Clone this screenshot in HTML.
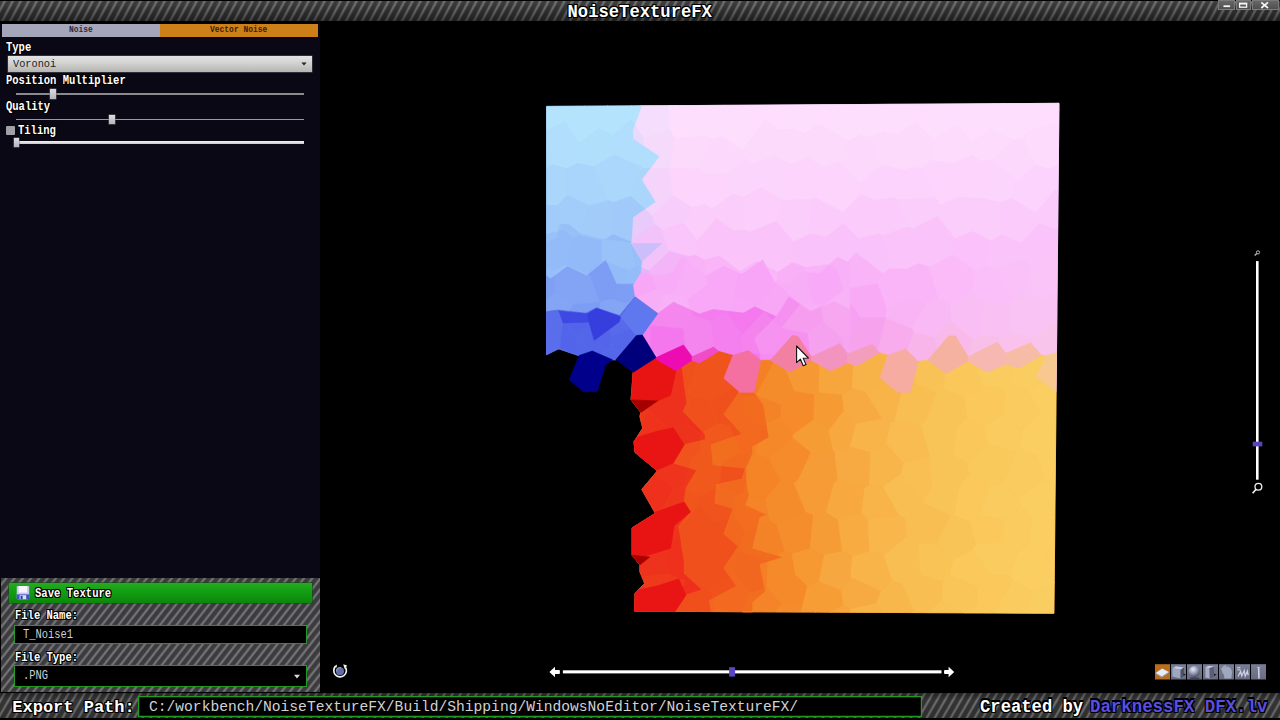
<!DOCTYPE html>
<html><head><meta charset="utf-8"><title>NoiseTextureFX</title>
<style>
html,body{margin:0;padding:0;background:#000;width:1280px;height:720px;overflow:hidden}
body{position:relative;font-family:"Liberation Mono",monospace;color:#fff}
.a{position:absolute}
.t{position:absolute;white-space:pre;line-height:1;transform-origin:0 0}
.b{font-weight:bold}
.ol{text-shadow:1px 0 0 #000,-1px 0 0 #000,0 1px 0 #000,0 -1px 0 #000,1px 1px 0 #000,-1px -1px 0 #000,1px -1px 0 #000,-1px 1px 0 #000}
.cf1{background:linear-gradient(to bottom,rgba(255,255,255,.07) 0%,rgba(0,0,0,.05) 45%,rgba(0,0,0,.38) 100%),repeating-linear-gradient(118deg,#2f2f2f 0,#333 2.4px,#5c5c5c 3.5px,#6c6c6c 4.2px,#5c5c5c 5px,#333 6.2px,#2f2f2f 7.06px)}
.cf2{background:repeating-linear-gradient(128deg,#3a3a3d 0,#3e3e41 2.5px,#6a6a6e 3.6px,#78787c 4.25px,#6a6a6e 4.9px,#3e3e41 6px,#3a3a3d 6.52px)}
.cf3{background:linear-gradient(to bottom,rgba(0,0,0,.3) 0%,rgba(0,0,0,0) 30%,rgba(0,0,0,.1) 100%),repeating-linear-gradient(120deg,#323232 0,#363636 2.4px,#606060 3.5px,#727272 4.2px,#606060 4.9px,#363636 6px,#323232 6.93px)}
.lbl{font-size:12px;font-weight:bold;transform:scaleX(.875)}
</style></head><body>
<!-- title bar -->
<div class="a cf1" style="left:0;top:1px;width:1280px;height:19.5px"></div>
<div class="t b ol" style="left:567.5px;top:3.6px;font-size:17.2px;transform:scaleY(1.03)">NoiseTextureFX</div>
<!-- window buttons -->
<div class="a" style="left:1218px;top:0;width:16.5px;height:9.5px;background:linear-gradient(#6a6a6a,#4c4c4c);box-shadow:inset 0 0 0 1px #7a7a7a"></div>
<div class="a" style="left:1235.5px;top:0;width:15px;height:9.5px;background:linear-gradient(#6a6a6a,#4c4c4c);box-shadow:inset 0 0 0 1px #7a7a7a"></div>
<div class="a" style="left:1251.5px;top:0;width:27.5px;height:9.5px;background:linear-gradient(#6a6a6a,#4c4c4c);box-shadow:inset 0 0 0 1px #7a7a7a"></div>
<svg class="a" style="left:1216px;top:0" width="64" height="12" viewBox="1216 0 64 12">
<rect x="1223.5" y="5.3" width="6.6" height="1.8" fill="#f4f4f4"/>
<rect x="1239.6" y="3.8" width="7" height="3.4" fill="none" stroke="#f4f4f4" stroke-width="1.3"/><rect x="1239" y="2.6" width="8.2" height="1.6" fill="#f4f4f4"/>
<path d="M1261.3 2.3 L1268 8 M1268 2.3 L1261.3 8" stroke="#f4f4f4" stroke-width="1.7" fill="none"/>
</svg>
<!-- left panel -->
<div class="a" style="left:0;top:20.5px;width:319.7px;height:558px;background:#0a0814"></div>
<div class="a" style="left:0;top:20.5px;width:320px;height:3.5px;background:#020205"></div>
<div class="a" style="left:2px;top:24px;width:158px;height:12.8px;background:#a6a6ba"></div>
<div class="a" style="left:160px;top:24px;width:158px;height:12.8px;background:#cd8018"></div>
<div class="t b" style="left:68.8px;top:26px;font-size:9px;color:#2b2b40;transform:scaleX(.885)">Noise</div>
<div class="t b" style="left:209.8px;top:26px;font-size:9px;color:#3a2204;transform:scaleX(.885)">Vector Noise</div>
<div class="t lbl ol" style="left:5.8px;top:41.5px">Type</div>
<div class="a" style="left:8.3px;top:56px;width:303.4px;height:16px;background:linear-gradient(#e4e4e4,#d2d2d0 45%,#b4b4b0);box-shadow:0 0 0 .5px #55555c"></div>
<div class="t" style="left:12.6px;top:58.6px;font-size:11px;color:#1e1e1e;transform:scaleX(.935)">Voronoi</div>
<svg class="a" style="left:300px;top:60px" width="9" height="8"><path d="M1.4 2.6 L6.6 2.6 L4 5.6Z" fill="#222"/></svg>
<div class="t lbl ol" style="left:5.8px;top:75.1px">Position Multiplier</div>
<div class="a" style="left:16px;top:93px;width:288.2px;height:2px;background:#8a8a8e"></div>
<div class="a" style="left:50.3px;top:89.4px;width:6px;height:9.2px;background:linear-gradient(#dcdce2,#b4b4bc);box-shadow:0 0 0 .5px #666"></div>
<div class="t lbl ol" style="left:5.8px;top:101.3px">Quality</div>
<div class="a" style="left:16px;top:118.5px;width:288.2px;height:1.6px;background:#9a9a9e"></div>
<div class="a" style="left:109.3px;top:115.2px;width:5.8px;height:9px;background:linear-gradient(#dcdce2,#b4b4bc);box-shadow:0 0 0 .5px #666"></div>
<div class="a" style="left:6.2px;top:126.4px;width:9px;height:9px;background:#a0a0a6;border-radius:1px"></div>
<div class="t lbl ol" style="left:18px;top:125.2px">Tiling</div>
<div class="a" style="left:16px;top:141px;width:288.2px;height:2.8px;background:linear-gradient(#f4f4f4,#c8c8c8)"></div>
<div class="a" style="left:13.5px;top:137.8px;width:5.2px;height:9.6px;background:linear-gradient(#dcdce2,#b4b4bc);box-shadow:0 0 0 .5px #666"></div>
<!-- save panel -->
<div class="a cf2" style="left:1px;top:578.3px;width:318.5px;height:114.2px"></div>
<div class="a" style="left:8.6px;top:582.8px;width:303.4px;height:20.5px;background:linear-gradient(#2aa822,#12a012 40%,#0c860c);box-shadow:0 0 0 .6px #0a500a"></div>
<svg class="a" style="left:16px;top:585px" width="15" height="16" viewBox="0 0 15 16">
<rect x=".7" y="1" width="12.5" height="13.2" rx="1" fill="#c9c6ee"/>
<rect x="2.6" y="1" width="8.6" height="6.6" fill="#f7f6ff"/>
<rect x=".7" y="9.4" width="12.5" height="4.8" fill="#3d55c8"/>
<rect x="3.6" y="10.2" width="6.6" height="4" fill="#dcdcf0"/><rect x="4.6" y="10.8" width="2" height="3.4" fill="#2b3ea6"/>
</svg>
<div class="t lbl ol" style="left:35.2px;top:587.5px;font-size:12.1px">Save Texture</div>
<div class="t lbl ol" style="left:15.2px;top:609.6px">File Name:</div>
<div class="a" style="left:13.9px;top:624.9px;width:293px;height:19.2px;background:#000;box-shadow:inset 0 0 0 1px #239a23"></div>
<div class="t" style="left:22.8px;top:628.5px;font-size:12px;color:#cfcfcf;transform:scaleX(.868)">T_Noise1</div>
<div class="t lbl ol" style="left:15.2px;top:651.5px">File Type:</div>
<div class="a" style="left:13.9px;top:665.2px;width:293px;height:21.5px;background:#000;box-shadow:inset 0 0 0 1px #239a23"></div>
<div class="t" style="left:22.8px;top:670px;font-size:12px;color:#cfcfcf;transform:scaleX(.868)">.PNG</div>
<svg class="a" style="left:292px;top:672px" width="10" height="8"><path d="M2 2.8 L8 2.8 L5 6.4Z" fill="#ddd"/></svg>
<!-- bottom bar -->
<div class="a cf3" style="left:0;top:693.3px;width:1280px;height:25px"></div>
<div class="t b ol" style="left:12.3px;top:699.3px;font-size:17px">Export Path:</div>
<div class="a" style="left:137.5px;top:695.6px;width:784px;height:21.4px;background:#000;box-shadow:inset 0 0 0 1.2px #239a23"></div>
<div class="t" style="left:148.6px;top:700.2px;font-size:15px;color:#d2d2d2;transform:scaleX(.9745)">C:/workbench/NoiseTextureFX/Build/Shipping/WindowsNoEditor/NoiseTextureFX/</div>
<div class="t b ol" style="left:980px;top:697.5px;font-size:17.2px;transform:scaleY(1.04)">Created by</div>
<div class="t b ol" style="left:1090px;top:697.5px;font-size:17.4px;color:#5a4ee0;transform:scaleY(1.04)">DarknessFX DFX.lv</div>
<!-- viewport widgets -->
<svg class="a" style="left:320px;top:240px" width="960" height="452" viewBox="320 240 960 452">
<!-- rotate icon -->
<circle cx="340" cy="671.2" r="4" fill="#6070a4"/><path d="M336.4 671.4 A3.6 3.6 0 0 1 341 667.8" stroke="#8a98c4" stroke-width="1.2" fill="none"/>
<path d="M335.6 666.2 A6.3 6.3 0 1 0 345.4 667.2" fill="none" stroke="#f2f2f2" stroke-width="1.7"/>
<path d="M343.2 664.2 L347.2 665.6 L344.6 668.8Z" fill="#f2f2f2"/><path d="M334.2 666.6 L336.8 664.6 L336.8 667.4Z" fill="#f2f2f2"/>
<!-- h slider -->
<rect x="562.9" y="670.3" width="378.6" height="3.1" fill="#fff"/>
<path d="M549.4 672 L555 666.8 L555 669.9 L559.6 669.9 Q560.4 672 559.6 674.1 L555 674.1 L555 677.2Z" fill="#fff"/>
<path d="M954.2 672 L948.6 666.8 L948.6 669.9 L944.4 669.9 Q943.4 672 944.4 674.1 L948.6 674.1 L948.6 677.2Z" fill="#fff"/>
<rect x="729.1" y="667.2" width="6" height="9.4" fill="#5a46c0"/>
<!-- v slider -->
<rect x="1256" y="261.1" width="2.6" height="218.6" fill="#fff"/>
<rect x="1252.7" y="441.7" width="9.6" height="4.7" fill="#5646b8"/>
<circle cx="1258" cy="252.4" r="1.6" fill="none" stroke="#bbb" stroke-width="1"/><path d="M1256.8 253.6 L1254.6 255.6" stroke="#bbb" stroke-width="1.3"/>
<circle cx="1258.4" cy="486.7" r="3.4" fill="none" stroke="#f0f0f0" stroke-width="1.3"/><path d="M1256 489.4 L1252.6 493.2" stroke="#f0f0f0" stroke-width="1.6"/>
</svg>
<svg class="a" style="left:540px;top:98px" width="524" height="520" viewBox="540 98 524 520"><g stroke-width=".7" stroke-linejoin="round">
<path d="M558.2 348.6 579.0 355.6 592.3 351.1 612.4 359.7 615.9 359.7 636.5 335.5 642.3 335.0 657.8 313.5 635.4 297.0 633.5 285.3 641.3 272.7 642.3 261.0 631.6 243.5 632.5 235.0 633.5 217.5 655.9 202.0 642.2 179.6 659.8 156.3 633.5 138.8 633.5 130.0 642.2 105.8 546.6 106.4 546.6 354.6Z" fill="#96bef8" stroke="#96bef8"/>
<path d="M633.5 130.0 633.5 138.8 659.8 156.3 642.2 179.6 655.9 202.0 633.5 217.5 632.5 235.0 631.6 243.5 642.3 261.0 641.3 272.7 633.5 285.3 635.4 297.0 657.8 313.5 642.3 335.0 656.1 357.6 656.7 359.6 676.0 370.7 692.0 360.3 699.7 363.0 718.5 351.3 733.0 355.4 724.0 378.3 740.0 392.2 753.9 392.2 760.8 360.3 770.4 360.3 789.9 372.1 811.4 360.3 830.8 370.7 847.5 363.0 857.2 365.8 879.4 352.6 887.8 355.4 880.1 377.6 897.5 392.2 910.2 392.2 918.2 361.5 927.8 360.3 946.5 373.5 968.0 361.0 986.8 372.1 1005.6 364.4 1019.4 367.9 1041.7 355.4 1047.0 355.4 1036.1 376.3 1055.6 391.5 1056.1 391.5 1059.0 103.3 642.2 105.8Z" fill="#fbc8fa" stroke="#fbc8fa"/>
<path d="M631.1 399.9 640.9 412.5 639.9 416.4 642.8 428.1 634.0 441.7 635.0 452.4 657.4 470.9 641.8 489.4 655.4 513.3 632.1 527.9 632.1 555.2 639.9 564.9 639.9 571.7 644.7 583.4 635.0 593.1 634.7 611.2 1053.9 613.3 1056.1 391.5 1055.6 391.5 1036.1 376.3 1047.0 355.4 1041.7 355.4 1019.4 367.9 1005.6 364.4 986.8 372.1 968.0 361.0 946.5 373.5 927.8 360.3 918.2 361.5 910.2 392.2 897.5 392.2 880.1 377.6 887.8 355.4 879.4 352.6 857.2 365.8 847.5 363.0 830.8 370.7 811.4 360.3 789.9 372.1 770.4 360.3 760.8 360.3 753.9 392.2 740.0 392.2 724.0 378.3 733.0 355.4 718.5 351.3 699.7 363.0 692.0 360.3 676.0 370.7 656.7 359.6 656.1 357.6 633.2 372.2Z" fill="#f6a037" stroke="#f6a037"/>
<path d="M569.1 110.6 578.2 106.2 563.2 106.3Z" fill="#b4e4fd" stroke="#b4e4fd"/>
<path d="M592.8 111.1 608.0 106.0 584.3 106.2Z" fill="#b4e4fd" stroke="#b4e4fd"/>
<path d="M634.0 107.9 641.4 105.8 631.5 105.9Z" fill="#b4e4fd" stroke="#b4e4fd"/>
<path d="M669.3 106.1 670.9 105.6 668.4 105.7Z" fill="#f8defd" stroke="#f8defd"/>
<path d="M693.4 110.2 702.1 105.5 674.3 105.6Z" fill="#fddefd" stroke="#fddefd"/>
<path d="M730.9 108.4 735.9 105.9 736.0 105.3 724.1 105.3Z" fill="#fddefd" stroke="#fddefd"/>
<path d="M735.9 105.9 762.6 113.0 767.5 105.1 736.0 105.3Z" fill="#fddefd" stroke="#fddefd"/>
<path d="M855.4 109.0 863.3 104.5 850.1 104.6Z" fill="#fddefd" stroke="#fddefd"/>
<path d="M916.5 113.3 943.9 105.2 943.6 104.0 910.7 104.2Z" fill="#fddefd" stroke="#fddefd"/>
<path d="M943.9 105.2 957.6 113.5 965.0 107.9 965.1 103.9 943.6 104.0Z" fill="#fddefd" stroke="#fddefd"/>
<path d="M965.0 107.9 989.4 107.0 993.4 103.7 965.1 103.9Z" fill="#fddefd" stroke="#fddefd"/>
<path d="M1020.4 116.7 1029.1 103.5 1003.7 103.6Z" fill="#fddefd" stroke="#fddefd"/>
<path d="M1059.0 104.1 1059.0 103.3 1057.8 103.3Z" fill="#fddefd" stroke="#fddefd"/>
<path d="M564.9 121.7 569.1 110.6 563.2 106.3 546.6 106.4 546.6 131.3Z" fill="#b4e4fd" stroke="#b4e4fd"/>
<path d="M569.1 110.6 564.9 121.7 578.9 144.1 599.1 128.5 592.8 111.1 584.3 106.2 578.2 106.2Z" fill="#b4e4fd" stroke="#b4e4fd"/>
<path d="M592.8 111.1 599.1 128.5 613.2 136.0 631.2 119.7 634.0 107.9 631.5 105.9 608.0 106.0Z" fill="#b4e4fd" stroke="#b4e4fd"/>
<path d="M634.0 107.9 631.2 119.7 635.1 125.5 642.2 105.8 641.4 105.8Z" fill="#b4e3fd" stroke="#b4e3fd"/>
<path d="M669.6 129.8 669.3 106.1 668.4 105.7 642.2 105.8 635.1 125.5 644.0 138.8Z" fill="#f5defd" stroke="#f5defd"/>
<path d="M669.3 106.1 669.6 129.8 674.3 139.1 705.3 135.8 693.4 110.2 674.3 105.6 670.9 105.6Z" fill="#fddefd" stroke="#fddefd"/>
<path d="M705.3 135.8 711.0 139.4 722.1 136.5 730.9 108.4 724.1 105.3 702.1 105.5 693.4 110.2Z" fill="#fddefd" stroke="#fddefd"/>
<path d="M722.1 136.5 742.3 150.7 765.2 119.9 762.6 113.0 735.9 105.9 730.9 108.4Z" fill="#fddefd" stroke="#fddefd"/>
<path d="M762.6 113.0 765.2 119.9 779.5 130.0 793.5 129.0 796.1 104.9 767.5 105.1Z" fill="#fddefd" stroke="#fddefd"/>
<path d="M793.5 129.0 804.6 133.7 818.9 124.3 822.2 104.7 796.1 104.9Z" fill="#fddefd" stroke="#fddefd"/>
<path d="M818.9 124.3 849.2 141.4 858.7 135.3 855.4 109.0 850.1 104.6 822.2 104.7Z" fill="#fddefd" stroke="#fddefd"/>
<path d="M855.4 109.0 858.7 135.3 868.3 137.4 883.3 131.9 888.0 104.3 863.3 104.5Z" fill="#fddefd" stroke="#fddefd"/>
<path d="M883.3 131.9 897.7 134.9 915.7 122.3 916.5 113.3 910.7 104.2 888.0 104.3Z" fill="#fddefd" stroke="#fddefd"/>
<path d="M933.0 139.4 956.9 124.7 957.6 113.5 943.9 105.2 916.5 113.3 915.7 122.3Z" fill="#fddefd" stroke="#fddefd"/>
<path d="M956.9 124.7 971.5 142.8 991.0 129.6 989.4 107.0 965.0 107.9 957.6 113.5Z" fill="#fddefd" stroke="#fddefd"/>
<path d="M1003.7 103.6 993.4 103.7 989.4 107.0 991.0 129.6 1013.7 140.0 1023.8 138.4 1026.2 132.9 1020.4 116.7Z" fill="#fddefd" stroke="#fddefd"/>
<path d="M1020.4 116.7 1026.2 132.9 1053.1 122.5 1058.9 109.5 1059.0 104.1 1057.8 103.3 1029.1 103.5Z" fill="#fddefd" stroke="#fddefd"/>
<path d="M1053.1 122.5 1058.7 129.8 1058.9 109.5Z" fill="#fddefd" stroke="#fddefd"/>
<path d="M552.9 164.7 546.6 149.2 546.6 167.8Z" fill="#b0dffc" stroke="#b0dffc"/>
<path d="M552.9 164.7 567.2 168.9 577.7 163.4 578.9 144.1 564.9 121.7 546.6 131.3 546.6 149.2Z" fill="#b0defc" stroke="#b0defc"/>
<path d="M577.7 163.4 593.5 166.8 614.6 155.2 613.2 136.0 599.1 128.5 578.9 144.1Z" fill="#b0dffc" stroke="#b0dffc"/>
<path d="M631.2 119.7 613.2 136.0 614.6 155.2 641.5 167.3 643.4 145.4 633.5 138.8 633.5 130.0 635.1 125.5Z" fill="#b0defc" stroke="#b0defc"/>
<path d="M644.0 138.8 635.1 125.5 633.5 130.0 633.5 138.8 643.4 145.4Z" fill="#e9dafc" stroke="#e9dafc"/>
<path d="M642.4 168.4 650.6 168.5 659.8 156.3 643.4 145.4 641.5 167.3Z" fill="#b0defc" stroke="#b0defc"/>
<path d="M669.5 168.6 670.2 168.2 674.3 139.1 669.6 129.8 644.0 138.8 643.4 145.4 659.8 156.3 650.6 168.5Z" fill="#f5dafc" stroke="#f5dafc"/>
<path d="M699.8 169.3 711.0 139.4 705.3 135.8 674.3 139.1 670.2 168.2Z" fill="#fcdafc" stroke="#fcdafc"/>
<path d="M699.8 169.3 703.7 173.4 727.6 174.1 745.5 159.2 742.3 150.7 722.1 136.5 711.0 139.4Z" fill="#fcd9fc" stroke="#fcd9fc"/>
<path d="M742.3 150.7 745.5 159.2 753.5 163.9 774.9 155.9 779.5 130.0 765.2 119.9Z" fill="#fcdafc" stroke="#fcdafc"/>
<path d="M793.5 129.0 779.5 130.0 774.9 155.9 790.4 164.6 808.2 157.8 804.6 133.7Z" fill="#fcdafc" stroke="#fcdafc"/>
<path d="M808.2 157.8 823.1 167.2 839.4 162.1 849.2 141.4 818.9 124.3 804.6 133.7Z" fill="#fcdafc" stroke="#fcdafc"/>
<path d="M839.4 162.1 860.1 184.4 881.1 165.2 868.3 137.4 858.7 135.3 849.2 141.4Z" fill="#fcd9fc" stroke="#fcd9fc"/>
<path d="M868.3 137.4 881.1 165.2 905.3 170.3 909.2 168.0 897.7 134.9 883.3 131.9Z" fill="#fcdafc" stroke="#fcdafc"/>
<path d="M897.7 134.9 909.2 168.0 922.4 168.0 930.9 160.6 933.0 139.4 915.7 122.3Z" fill="#fcdafc" stroke="#fcdafc"/>
<path d="M930.9 160.6 953.1 163.4 972.2 155.0 971.5 142.8 956.9 124.7 933.0 139.4Z" fill="#fcdbfc" stroke="#fcdbfc"/>
<path d="M971.5 142.8 972.2 155.0 980.2 161.5 992.1 160.1 1013.7 140.0 991.0 129.6Z" fill="#fcdbfc" stroke="#fcdbfc"/>
<path d="M1013.7 140.0 992.1 160.1 1017.5 181.1 1035.3 165.2 1023.8 138.4Z" fill="#fcd9fc" stroke="#fcd9fc"/>
<path d="M1053.1 122.5 1026.2 132.9 1023.8 138.4 1035.3 165.2 1049.8 169.4 1058.4 164.6 1058.7 129.8Z" fill="#fcdbfc" stroke="#fcdbfc"/>
<path d="M557.5 205.8 567.1 195.5 567.2 168.9 552.9 164.7 546.6 167.8 546.6 205.2Z" fill="#aad6fc" stroke="#aad6fc"/>
<path d="M567.2 168.9 567.1 195.5 589.3 205.9 608.4 200.5 593.5 166.8 577.7 163.4Z" fill="#a9d5fc" stroke="#a9d5fc"/>
<path d="M593.5 166.8 608.4 200.5 613.4 202.6 630.8 196.4 642.4 168.4 641.5 167.3 614.6 155.2Z" fill="#abd7fc" stroke="#abd7fc"/>
<path d="M642.4 168.4 630.8 196.4 645.2 209.4 655.9 202.0 642.2 179.6 650.6 168.5Z" fill="#aad6fc" stroke="#aad6fc"/>
<path d="M652.7 216.2 672.9 195.8 669.5 168.6 650.6 168.5 642.2 179.6 655.9 202.0 645.2 209.4Z" fill="#f5d4fc" stroke="#f5d4fc"/>
<path d="M703.7 173.4 699.8 169.3 670.2 168.2 669.5 168.6 672.9 195.8 692.2 207.5 705.2 204.8Z" fill="#fcd4fc" stroke="#fcd4fc"/>
<path d="M732.4 194.1 727.6 174.1 703.7 173.4 705.2 204.8 712.0 209.2Z" fill="#fcd4fc" stroke="#fcd4fc"/>
<path d="M727.6 174.1 732.4 194.1 744.4 197.3 761.0 187.5 753.5 163.9 745.5 159.2Z" fill="#fcd5fc" stroke="#fcd5fc"/>
<path d="M790.4 164.6 774.9 155.9 753.5 163.9 761.0 187.5 782.6 200.2Z" fill="#fcd5fc" stroke="#fcd5fc"/>
<path d="M790.4 164.6 782.6 200.2 782.8 200.3 811.1 199.8 815.3 198.0 823.1 167.2 808.2 157.8Z" fill="#fcd4fc" stroke="#fcd4fc"/>
<path d="M815.3 198.0 842.6 212.2 861.3 194.4 860.1 184.4 839.4 162.1 823.1 167.2Z" fill="#fcd4fc" stroke="#fcd4fc"/>
<path d="M860.1 184.4 861.3 194.4 875.1 200.2 894.8 197.7 905.3 170.3 881.1 165.2Z" fill="#fcd3fc" stroke="#fcd3fc"/>
<path d="M905.3 170.3 894.8 197.7 896.6 200.0 935.3 198.0 922.4 168.0 909.2 168.0Z" fill="#fcd3fc" stroke="#fcd3fc"/>
<path d="M959.0 197.4 953.1 163.4 930.9 160.6 922.4 168.0 935.3 198.0 940.8 205.2Z" fill="#fcd4fc" stroke="#fcd4fc"/>
<path d="M980.2 161.5 972.2 155.0 953.1 163.4 959.0 197.4 980.8 198.3Z" fill="#fcd4fc" stroke="#fcd4fc"/>
<path d="M981.0 198.5 1000.6 202.4 1011.0 197.9 1017.5 181.1 992.1 160.1 980.2 161.5 980.8 198.3Z" fill="#fcd5fc" stroke="#fcd5fc"/>
<path d="M1011.0 197.9 1035.5 213.2 1055.1 189.7 1049.8 169.4 1035.3 165.2 1017.5 181.1Z" fill="#fcd3fc" stroke="#fcd3fc"/>
<path d="M1049.8 169.4 1055.1 189.7 1058.1 191.6 1058.4 164.6Z" fill="#fcd3fc" stroke="#fcd3fc"/>
<path d="M558.3 231.6 559.9 224.6 561.9 224.5 557.5 205.8 546.6 205.2 546.6 234.1Z" fill="#a1cbfa" stroke="#a1cbfa"/>
<path d="M563.3 230.5 561.9 224.5 559.9 224.6 558.3 231.6Z" fill="#99c1f8" stroke="#99c1f8"/>
<path d="M589.3 205.9 567.1 195.5 557.5 205.8 561.9 224.5 568.3 224.3 580.1 233.6Z" fill="#a2ccfa" stroke="#a2ccfa"/>
<path d="M563.3 230.5 573.0 237.8 579.4 235.8 580.1 233.6 568.3 224.3 561.9 224.5Z" fill="#98c0f8" stroke="#98c0f8"/>
<path d="M580.1 233.6 581.3 234.5 601.1 239.1 605.0 239.6 613.2 234.7 613.4 202.6 608.4 200.5 589.3 205.9Z" fill="#a2cbfa" stroke="#a2cbfa"/>
<path d="M579.4 235.8 602.2 241.3 605.0 239.6 601.1 239.1 581.3 234.5 580.1 233.6Z" fill="#97c0f8" stroke="#97c0f8"/>
<path d="M630.8 196.4 613.4 202.6 613.2 234.7 630.7 242.0 631.9 241.1 632.5 235.0 633.5 217.5 645.2 209.4Z" fill="#a1cafa" stroke="#a1cafa"/>
<path d="M645.2 209.4 633.5 217.5 632.5 235.0 631.9 241.1 654.4 224.4 652.7 216.2Z" fill="#e8cbfb" stroke="#e8cbfb"/>
<path d="M692.2 207.5 672.9 195.8 652.7 216.2 654.4 224.4 661.9 229.7 683.1 223.1Z" fill="#f6cdfb" stroke="#f6cdfb"/>
<path d="M705.2 204.8 692.2 207.5 683.1 223.1 697.4 240.5 716.4 219.0 712.0 209.2Z" fill="#fbcdfb" stroke="#fbcdfb"/>
<path d="M716.4 219.0 734.1 230.7 745.0 230.2 744.4 197.3 732.4 194.1 712.0 209.2Z" fill="#fbcdfb" stroke="#fbcdfb"/>
<path d="M761.0 187.5 744.4 197.3 745.0 230.2 750.4 232.3 776.2 221.2 782.8 200.3 782.6 200.2Z" fill="#fbcefb" stroke="#fbcefb"/>
<path d="M776.2 221.2 793.2 242.1 810.2 234.1 811.1 199.8 782.8 200.3Z" fill="#fbcdfb" stroke="#fbcdfb"/>
<path d="M810.2 234.1 826.1 237.0 843.5 223.6 842.6 212.2 815.3 198.0 811.1 199.8Z" fill="#fbccfb" stroke="#fbccfb"/>
<path d="M843.5 223.6 858.8 238.7 879.2 234.1 875.1 200.2 861.3 194.4 842.6 212.2Z" fill="#fbccfb" stroke="#fbccfb"/>
<path d="M879.2 234.1 883.5 235.5 908.2 226.8 896.6 200.0 894.8 197.7 875.1 200.2Z" fill="#fbcbfb" stroke="#fbcbfb"/>
<path d="M935.3 198.0 896.6 200.0 908.2 226.8 912.8 228.5 937.4 216.6 940.8 205.2Z" fill="#fbcdfb" stroke="#fbcdfb"/>
<path d="M937.4 216.6 954.9 238.8 972.1 231.5 981.0 198.5 980.8 198.3 959.0 197.4 940.8 205.2Z" fill="#fbcdfb" stroke="#fbcdfb"/>
<path d="M991.0 241.0 1002.1 234.5 1000.6 202.4 981.0 198.5 972.1 231.5Z" fill="#fbcdfb" stroke="#fbcdfb"/>
<path d="M1011.0 197.9 1000.6 202.4 1002.1 234.5 1021.5 243.4 1039.3 223.3 1035.5 213.2Z" fill="#fbccfb" stroke="#fbccfb"/>
<path d="M1055.1 189.7 1035.5 213.2 1039.3 223.3 1055.9 229.8 1057.7 229.2 1058.1 191.6Z" fill="#fbccfb" stroke="#fbccfb"/>
<path d="M546.6 234.1 546.6 242.7 556.8 238.3 558.3 231.6Z" fill="#99c0f8" stroke="#99c0f8"/>
<path d="M555.0 270.9 565.5 265.1 573.0 237.8 563.3 230.5 558.3 231.6 556.8 238.3 546.6 242.7 546.6 268.2Z" fill="#93bbf8" stroke="#93bbf8"/>
<path d="M565.5 265.1 587.8 274.9 597.1 267.4 602.0 261.0 602.2 241.3 579.4 235.8 573.0 237.8Z" fill="#93baf8" stroke="#93baf8"/>
<path d="M590.5 276.0 597.1 267.4 587.8 274.9Z" fill="#7c9bf4" stroke="#7c9bf4"/>
<path d="M630.7 242.0 613.2 234.7 605.0 239.6 630.9 242.8Z" fill="#95baf7" stroke="#95baf7"/>
<path d="M602.2 241.3 602.0 261.0 604.1 261.7 605.7 260.5 606.7 262.6 629.5 270.5 636.9 266.3 630.9 242.8 605.0 239.6Z" fill="#99c2f8" stroke="#99c2f8"/>
<path d="M606.7 262.6 605.7 260.5 604.1 261.7Z" fill="#84a5f4" stroke="#84a5f4"/>
<path d="M630.7 242.0 630.9 242.8 631.7 242.9 631.6 243.5 631.9 241.1Z" fill="#97bdf8" stroke="#97bdf8"/>
<path d="M636.9 266.3 641.7 268.0 642.3 261.0 631.6 243.5 631.7 242.9 630.9 242.8Z" fill="#97bff8" stroke="#97bff8"/>
<path d="M631.9 241.1 631.6 243.5 642.3 261.0 641.7 268.0 649.4 270.8 669.5 251.3 661.9 229.7 654.4 224.4Z" fill="#f2c2fa" stroke="#f2c2fa"/>
<path d="M661.9 229.7 669.5 251.3 688.3 256.6 695.6 255.2 697.4 240.5 683.1 223.1Z" fill="#fac5fa" stroke="#fac5fa"/>
<path d="M697.4 240.5 695.6 255.2 704.0 260.1 719.3 256.0 734.1 230.7 716.4 219.0Z" fill="#fac4fa" stroke="#fac4fa"/>
<path d="M739.8 271.5 756.5 261.5 750.4 232.3 745.0 230.2 734.1 230.7 719.3 256.0Z" fill="#fac4fa" stroke="#fac4fa"/>
<path d="M778.1 272.2 792.3 262.6 793.2 242.1 776.2 221.2 750.4 232.3 756.5 261.5 758.7 262.6 762.8 259.8 766.1 266.3Z" fill="#fac4fa" stroke="#fac4fa"/>
<path d="M766.1 266.3 762.8 259.8 758.7 262.6Z" fill="#f8a7f7" stroke="#f8a7f7"/>
<path d="M805.7 267.6 827.1 264.6 826.1 237.0 810.2 234.1 793.2 242.1 792.3 262.6Z" fill="#fac2fa" stroke="#fac2fa"/>
<path d="M856.4 253.0 858.8 238.7 843.5 223.6 826.1 237.0 827.1 264.6 828.6 265.4 837.7 257.1 847.0 261.9Z" fill="#fac2fa" stroke="#fac2fa"/>
<path d="M838.1 270.4 847.0 261.9 837.7 257.1 828.6 265.4Z" fill="#f8b0f7" stroke="#f8b0f7"/>
<path d="M890.6 268.7 883.5 235.5 879.2 234.1 858.8 238.7 856.4 253.0 882.6 273.7Z" fill="#fac2fa" stroke="#fac2fa"/>
<path d="M919.2 263.6 912.8 228.5 908.2 226.8 883.5 235.5 890.6 268.7 906.6 269.1Z" fill="#fac4fa" stroke="#fac4fa"/>
<path d="M912.8 228.5 919.2 263.6 929.4 267.2 952.9 255.1 954.9 238.8 937.4 216.6Z" fill="#fac3fa" stroke="#fac3fa"/>
<path d="M954.9 238.8 952.9 255.1 975.7 271.8 985.9 266.5 991.0 241.0 972.1 231.5Z" fill="#fac1fa" stroke="#fac1fa"/>
<path d="M985.9 266.5 996.2 268.9 1024.4 259.4 1021.5 243.4 1002.1 234.5 991.0 241.0Z" fill="#fac3fa" stroke="#fac3fa"/>
<path d="M1021.5 243.4 1024.4 259.4 1030.3 265.0 1054.4 258.2 1055.9 229.8 1039.3 223.3Z" fill="#fac4fa" stroke="#fac4fa"/>
<path d="M1054.4 258.2 1057.4 260.1 1057.7 229.2 1055.9 229.8Z" fill="#fac4fa" stroke="#fac4fa"/>
<path d="M555.0 270.9 546.6 268.2 546.6 276.1 550.7 278.8 555.2 275.5Z" fill="#96bef8" stroke="#96bef8"/>
<path d="M555.9 292.6 555.2 275.5 550.7 278.8 546.6 276.1 546.6 300.4Z" fill="#80a0f4" stroke="#80a0f4"/>
<path d="M565.5 265.1 555.0 270.9 555.2 275.5 567.5 266.6 586.6 275.8 587.8 274.9Z" fill="#99c1f8" stroke="#99c1f8"/>
<path d="M587.8 274.9 586.6 275.8 567.5 266.6 555.2 275.5 555.9 292.6 572.8 305.0 600.2 301.9 590.5 276.0Z" fill="#83a4f4" stroke="#83a4f4"/>
<path d="M602.0 261.0 597.1 267.4 604.1 261.7Z" fill="#93bbf8" stroke="#93bbf8"/>
<path d="M629.5 270.5 606.7 262.6 616.4 284.2 621.0 284.2Z" fill="#93bbf8" stroke="#93bbf8"/>
<path d="M590.5 276.0 600.2 301.9 600.5 302.1 611.8 299.0 621.0 284.2 616.4 284.2 606.7 262.6 604.1 261.7 597.1 267.4Z" fill="#7d9cf4" stroke="#7d9cf4"/>
<path d="M636.9 266.3 629.5 270.5 621.0 284.2 633.2 284.2 634.2 284.2 641.3 272.7 641.7 268.0Z" fill="#94bcf8" stroke="#94bcf8"/>
<path d="M611.8 299.0 624.5 303.5 632.2 300.2 634.7 297.2 635.7 297.2 635.4 297.0 633.5 285.3 634.2 284.2 633.2 284.2 621.0 284.2Z" fill="#7e9df4" stroke="#7e9df4"/>
<path d="M636.9 298.1 635.7 297.2 634.7 297.2 632.2 300.2Z" fill="#5265ea" stroke="#5265ea"/>
<path d="M649.4 270.8 641.7 268.0 641.3 272.7 641.3 272.6 642.6 272.4 651.3 274.6Z" fill="#e6b4f8" stroke="#e6b4f8"/>
<path d="M658.2 288.9 651.3 274.6 642.6 272.4 641.3 272.6 641.3 272.7 633.5 285.3 635.4 297.0 636.9 298.1Z" fill="#f8a7f7" stroke="#f8a7f7"/>
<path d="M688.3 256.6 669.5 251.3 649.4 270.8 651.3 274.6 657.1 276.1 671.5 273.4 682.4 257.1 686.8 260.6Z" fill="#f4b4f8" stroke="#f4b4f8"/>
<path d="M674.2 294.0 686.8 260.6 682.4 257.1 671.5 273.4 657.1 276.1 651.3 274.6 658.2 288.9 664.3 294.2Z" fill="#f8acf7" stroke="#f8acf7"/>
<path d="M695.6 255.2 688.3 256.6 686.8 260.6 705.9 276.1 706.3 275.9 704.0 260.1Z" fill="#f9b2f8" stroke="#f9b2f8"/>
<path d="M674.2 294.0 687.3 299.9 707.6 284.6 706.3 275.9 705.9 276.1 686.8 260.6Z" fill="#f8aff7" stroke="#f8aff7"/>
<path d="M739.8 271.5 719.3 256.0 704.0 260.1 706.3 275.9 723.9 266.1 739.3 273.1Z" fill="#f9b5f8" stroke="#f9b5f8"/>
<path d="M707.6 284.6 732.7 295.0 739.3 273.1 723.9 266.1 706.3 275.9Z" fill="#f8a8f7" stroke="#f8a8f7"/>
<path d="M778.1 272.2 766.1 266.3 774.5 282.4 776.9 282.7Z" fill="#f9b6f8" stroke="#f9b6f8"/>
<path d="M756.5 261.5 739.8 271.5 739.3 273.1 742.0 274.3 758.7 262.6Z" fill="#f9b6f8" stroke="#f9b6f8"/>
<path d="M776.8 283.8 776.9 282.7 774.5 282.4 766.1 266.3 758.7 262.6 742.0 274.3 739.3 273.1 732.7 295.0 733.9 297.7 761.2 304.5Z" fill="#f8a5f7" stroke="#f8a5f7"/>
<path d="M778.1 272.2 776.9 282.7 789.0 284.2 799.8 272.4 806.7 272.7 805.7 267.6 792.3 262.6Z" fill="#f9b0f7" stroke="#f9b0f7"/>
<path d="M776.8 283.8 800.5 304.2 812.9 302.8 806.7 272.7 799.8 272.4 789.0 284.2 776.9 282.7Z" fill="#f8aef7" stroke="#f8aef7"/>
<path d="M806.7 272.7 819.7 273.4 828.6 265.4 827.1 264.6 805.7 267.6Z" fill="#f9b4f8" stroke="#f9b4f8"/>
<path d="M812.9 302.8 821.6 306.7 822.8 306.2 843.5 290.5 843.9 289.3 838.1 270.4 828.6 265.4 819.7 273.4 806.7 272.7Z" fill="#f8a9f7" stroke="#f8a9f7"/>
<path d="M877.4 283.7 882.6 273.7 856.4 253.0 847.0 261.9 850.0 263.4 850.0 288.3Z" fill="#f9b4f8" stroke="#f9b4f8"/>
<path d="M838.1 270.4 843.9 289.3 850.0 288.3 850.0 263.4 847.0 261.9Z" fill="#f8b1f7" stroke="#f8b1f7"/>
<path d="M906.6 269.1 890.6 268.7 882.6 273.7 877.4 283.7 887.0 309.6 907.1 297.2Z" fill="#fab4f8" stroke="#fab4f8"/>
<path d="M929.4 267.2 919.2 263.6 906.6 269.1 907.1 297.2 926.1 303.8 938.6 298.6Z" fill="#fab5f8" stroke="#fab5f8"/>
<path d="M950.1 304.6 971.8 293.2 975.7 271.8 952.9 255.1 929.4 267.2 938.6 298.6Z" fill="#fabbf8" stroke="#fabbf8"/>
<path d="M975.7 271.8 971.8 293.2 984.2 302.3 1009.9 303.4 1013.5 300.0 996.2 268.9 985.9 266.5Z" fill="#fabff8" stroke="#fabff8"/>
<path d="M996.2 268.9 1013.5 300.0 1031.8 293.8 1030.3 265.0 1024.4 259.4Z" fill="#fac1f8" stroke="#fac1f8"/>
<path d="M1057.1 291.7 1057.4 260.1 1054.4 258.2 1030.3 265.0 1031.8 293.8 1041.2 299.1Z" fill="#fac4f8" stroke="#fac4f8"/>
<path d="M572.8 305.0 555.9 292.6 546.6 300.4 546.6 311.6 558.3 310.1 569.6 311.4Z" fill="#84a5f4" stroke="#84a5f4"/>
<path d="M549.8 325.8 564.2 322.1 569.6 311.4 558.3 310.1 546.6 311.6 546.6 323.6Z" fill="#576bea" stroke="#576bea"/>
<path d="M600.2 301.9 572.8 305.0 569.6 311.4 585.8 313.2 596.5 307.9 600.5 309.2 600.5 302.1Z" fill="#7d9cf4" stroke="#7d9cf4"/>
<path d="M564.2 322.1 577.9 337.4 600.5 312.7 600.5 309.2 596.5 307.9 585.8 313.2 569.6 311.4Z" fill="#5164ea" stroke="#5164ea"/>
<path d="M624.5 303.5 611.8 299.0 600.5 302.1 600.5 309.2 619.5 315.5 627.0 306.5Z" fill="#84a5f4" stroke="#84a5f4"/>
<path d="M600.5 312.7 612.0 336.1 641.8 324.2 627.0 306.5 619.5 315.5 600.5 309.2Z" fill="#576bea" stroke="#576bea"/>
<path d="M624.5 303.5 627.0 306.5 632.2 300.2Z" fill="#83a4f4" stroke="#83a4f4"/>
<path d="M641.8 324.2 648.4 326.6 656.2 315.7 657.2 313.1 636.9 298.1 632.2 300.2 627.0 306.5Z" fill="#566aea" stroke="#566aea"/>
<path d="M664.3 294.2 658.2 288.9 636.9 298.1 657.2 313.1Z" fill="#f8aef7" stroke="#f8aef7"/>
<path d="M650.6 327.4 652.5 325.7 656.2 315.7 648.4 326.6Z" fill="#f483ee" stroke="#f483ee"/>
<path d="M656.2 315.7 657.8 313.5 657.2 313.1Z" fill="#586cea" stroke="#586cea"/>
<path d="M687.3 299.9 674.2 294.0 664.3 294.2 657.2 313.1 657.8 313.5 673.4 302.3 691.6 310.4Z" fill="#f8b0f7" stroke="#f8b0f7"/>
<path d="M691.6 310.4 673.4 302.3 657.8 313.5 656.2 315.7 652.5 325.7 683.7 329.0 693.7 315.7Z" fill="#f486ee" stroke="#f486ee"/>
<path d="M733.9 297.7 732.7 295.0 707.6 284.6 687.3 299.9 691.6 310.4 699.5 314.0 713.1 309.5 727.2 311.2Z" fill="#f8a8f7" stroke="#f8a8f7"/>
<path d="M726.5 312.6 727.2 311.2 713.1 309.5 699.5 314.0 691.6 310.4 693.7 315.7 711.0 321.8Z" fill="#f47cee" stroke="#f47cee"/>
<path d="M761.2 304.5 733.9 297.7 727.2 311.2 743.8 313.1 754.6 306.8 763.6 310.9Z" fill="#f8a6f7" stroke="#f8a6f7"/>
<path d="M726.5 312.6 742.1 335.5 764.0 312.1 763.6 310.9 754.6 306.8 743.8 313.1 727.2 311.2Z" fill="#f479ee" stroke="#f479ee"/>
<path d="M800.5 304.2 776.8 283.8 761.2 304.5 763.6 310.9 776.3 316.7 789.0 296.8 800.3 304.4Z" fill="#f8a7f7" stroke="#f8a7f7"/>
<path d="M772.4 320.6 776.3 316.7 763.6 310.9 764.0 312.1Z" fill="#f479ee" stroke="#f479ee"/>
<path d="M780.5 328.9 781.8 328.4 800.3 304.4 789.0 296.8 776.3 316.7 772.4 320.6Z" fill="#f690f0" stroke="#f690f0"/>
<path d="M812.9 302.8 800.5 304.2 800.3 304.4 810.6 311.3 821.6 306.7Z" fill="#f8aff7" stroke="#f8aff7"/>
<path d="M781.8 328.4 808.5 333.8 823.8 322.2 821.9 306.8 821.6 306.7 810.6 311.3 800.3 304.4Z" fill="#f69df0" stroke="#f69df0"/>
<path d="M860.7 317.7 850.0 300.8 850.0 309.5 850.0 330.8Z" fill="#f8a0f3" stroke="#f8a0f3"/>
<path d="M843.5 290.5 822.8 306.2 834.1 301.4 850.0 309.5 850.0 300.8Z" fill="#f8b3f7" stroke="#f8b3f7"/>
<path d="M823.8 322.2 843.3 339.0 850.0 330.8 850.0 309.5 834.1 301.4 822.8 306.2 821.9 306.8Z" fill="#f6a7f0" stroke="#f6a7f0"/>
<path d="M860.7 317.7 885.5 317.5 887.0 309.6 877.4 283.7 850.0 288.3 850.0 300.8Z" fill="#f9aaf5" stroke="#f9aaf5"/>
<path d="M843.9 289.3 843.5 290.5 850.0 300.8 850.0 288.3Z" fill="#f8b3f7" stroke="#f8b3f7"/>
<path d="M907.1 297.2 887.0 309.6 885.5 317.5 886.0 318.3 911.7 329.1 926.1 303.8Z" fill="#f9b4f5" stroke="#f9b4f5"/>
<path d="M950.1 304.6 938.6 298.6 926.1 303.8 911.7 329.1 913.8 332.4 934.8 338.0 951.4 321.6Z" fill="#f9b9f4" stroke="#f9b9f4"/>
<path d="M982.3 335.2 984.2 302.3 971.8 293.2 950.1 304.6 951.4 321.6 973.3 339.4Z" fill="#f9bef3" stroke="#f9bef3"/>
<path d="M1009.8 331.2 1009.9 303.4 984.2 302.3 982.3 335.2 1000.4 337.5Z" fill="#f9c1f3" stroke="#f9c1f3"/>
<path d="M1031.8 293.8 1013.5 300.0 1009.9 303.4 1009.8 331.2 1033.5 339.3 1048.4 323.5 1041.2 299.1Z" fill="#f9c3f4" stroke="#f9c3f4"/>
<path d="M1048.4 323.5 1056.8 325.9 1057.1 291.7 1041.2 299.1Z" fill="#f9c4f5" stroke="#f9c4f5"/>
<path d="M549.8 325.8 546.6 323.6 546.6 354.6 551.6 352.0Z" fill="#5365ea" stroke="#5365ea"/>
<path d="M577.9 337.4 564.2 322.1 549.8 325.8 551.6 352.0 558.2 348.6 577.4 355.1Z" fill="#5265ea" stroke="#5265ea"/>
<path d="M577.9 337.4 577.4 355.1 579.0 355.6 592.3 351.1 600.6 354.6 611.2 348.0 612.0 336.1 600.5 312.7Z" fill="#5366ea" stroke="#5366ea"/>
<path d="M641.8 324.2 612.0 336.1 611.2 348.0 621.2 353.5 636.5 335.5 642.3 335.0 648.4 326.6Z" fill="#5467ea" stroke="#5467ea"/>
<path d="M650.6 327.4 648.4 326.6 642.3 335.0 650.8 348.9Z" fill="#f47fee" stroke="#f47fee"/>
<path d="M652.5 325.7 650.6 327.4 650.8 348.9 652.8 352.2 660.6 357.6 686.1 354.4 683.7 329.0Z" fill="#f477ee" stroke="#f477ee"/>
<path d="M711.0 321.8 693.7 315.7 683.7 329.0 686.1 354.4 698.5 361.8 703.5 360.6 714.9 353.5Z" fill="#f484ee" stroke="#f484ee"/>
<path d="M715.5 357.9 714.9 353.5 703.5 360.6Z" fill="#f0571c" stroke="#f0571c"/>
<path d="M742.2 353.4 742.1 335.5 726.5 312.6 711.0 321.8 714.9 353.5 718.5 351.3 733.0 355.4 731.0 360.6Z" fill="#f47fee" stroke="#f47fee"/>
<path d="M715.5 357.9 728.5 362.2 731.0 360.6 733.0 355.4 718.5 351.3 714.9 353.5Z" fill="#f0541c" stroke="#f0541c"/>
<path d="M764.0 312.1 742.1 335.5 742.2 353.4 760.0 354.3 760.0 352.0 754.6 338.4 772.4 320.6Z" fill="#f483ee" stroke="#f483ee"/>
<path d="M780.5 328.9 772.4 320.6 754.6 338.4 760.0 352.0 760.0 354.3 773.0 354.9Z" fill="#f692f0" stroke="#f692f0"/>
<path d="M775.6 358.5 783.5 363.4 810.2 355.7 808.5 333.8 781.8 328.4 780.5 328.9 773.0 354.9Z" fill="#f691f0" stroke="#f691f0"/>
<path d="M819.6 360.1 845.2 349.5 843.3 339.0 823.8 322.2 808.5 333.8 810.2 355.7Z" fill="#f6a0f0" stroke="#f6a0f0"/>
<path d="M854.0 357.4 877.4 353.3 886.0 318.3 885.5 317.5 860.7 317.7 850.0 330.8 850.0 353.8Z" fill="#f6a2ed" stroke="#f6a2ed"/>
<path d="M843.3 339.0 845.2 349.5 850.0 353.8 850.0 330.8Z" fill="#f6a6f0" stroke="#f6a6f0"/>
<path d="M886.9 359.7 905.0 357.5 913.8 332.4 911.7 329.1 886.0 318.3 877.4 353.3 877.8 353.5 879.4 352.6 887.8 355.4 886.4 359.4Z" fill="#f8abed" stroke="#f8abed"/>
<path d="M886.4 359.4 887.8 355.4 879.4 352.6 877.8 353.5Z" fill="#f8b64a" stroke="#f8b64a"/>
<path d="M939.0 355.4 934.8 338.0 913.8 332.4 905.0 357.5 912.8 364.3 917.9 362.6 918.2 361.5 922.8 360.9Z" fill="#f8b5e9" stroke="#f8b5e9"/>
<path d="M922.8 360.9 918.2 361.5 917.9 362.6Z" fill="#f9bf53" stroke="#f9bf53"/>
<path d="M973.3 339.4 951.4 321.6 934.8 338.0 939.0 355.4 946.2 361.7 969.3 353.7Z" fill="#f9baeb" stroke="#f9baeb"/>
<path d="M976.5 364.2 1002.7 355.2 1000.4 337.5 982.3 335.2 973.3 339.4 969.3 353.7Z" fill="#f8bfe9" stroke="#f8bfe9"/>
<path d="M1034.7 349.8 1033.5 339.3 1009.8 331.2 1000.4 337.5 1002.7 355.2 1009.1 365.3 1014.3 366.6Z" fill="#f9c1ec" stroke="#f9c1ec"/>
<path d="M1014.3 366.6 1009.1 365.3 1011.4 368.9Z" fill="#facb5e" stroke="#facb5e"/>
<path d="M1056.4 362.9 1056.8 325.9 1048.4 323.5 1033.5 339.3 1034.7 349.8 1040.6 356.0 1041.7 355.4 1047.0 355.4 1044.6 360.1 1050.1 365.8Z" fill="#f9c4ec" stroke="#f9c4ec"/>
<path d="M1044.6 360.1 1047.0 355.4 1041.7 355.4 1040.6 356.0Z" fill="#face61" stroke="#face61"/>
<path d="M611.2 348.0 600.6 354.6 612.4 359.7 615.9 359.7 621.2 353.5Z" fill="#5467ea" stroke="#5467ea"/>
<path d="M660.6 357.6 652.8 352.2 656.1 357.6 656.7 359.6 660.6 361.8Z" fill="#f484ee" stroke="#f484ee"/>
<path d="M648.3 400.8 660.9 391.1 660.6 361.8 656.7 359.6 656.1 357.6 633.2 372.2 631.7 392.3Z" fill="#ee371c" stroke="#ee371c"/>
<path d="M660.6 357.6 660.6 361.8 676.0 370.7 692.0 360.3 698.2 362.5 698.5 361.8 686.1 354.4Z" fill="#f476ee" stroke="#f476ee"/>
<path d="M660.9 391.1 685.4 392.4 682.3 369.0 682.1 366.7 676.0 370.7 660.6 361.8Z" fill="#ee301c" stroke="#ee301c"/>
<path d="M688.0 392.5 698.2 362.5 692.0 360.3 682.1 366.7 682.3 369.0 685.4 392.4Z" fill="#f0501c" stroke="#f0501c"/>
<path d="M733.3 386.0 729.1 365.3 724.0 378.3 733.0 386.1Z" fill="#f47eee" stroke="#f47eee"/>
<path d="M698.5 361.8 698.2 362.5 699.7 363.0 703.5 360.6Z" fill="#f47eee" stroke="#f47eee"/>
<path d="M688.0 392.5 690.3 395.9 709.6 400.5 733.0 386.1 724.0 378.3 729.1 365.3 728.5 362.2 715.5 357.9 703.5 360.6 699.7 363.0 698.2 362.5Z" fill="#f0541c" stroke="#f0541c"/>
<path d="M733.3 386.0 736.4 389.1 740.0 392.2 753.9 392.2 760.0 364.0 760.0 354.3 742.2 353.4 731.0 360.6 729.1 365.3Z" fill="#f476ee" stroke="#f476ee"/>
<path d="M775.6 358.5 773.0 354.9 760.0 354.3 760.0 364.0 760.8 360.3 770.4 360.3 773.7 362.3Z" fill="#f68bf0" stroke="#f68bf0"/>
<path d="M728.5 362.2 729.1 365.3 731.0 360.6Z" fill="#f0501c" stroke="#f0501c"/>
<path d="M744.9 397.8 756.3 395.7 756.5 395.3 754.5 392.5 754.5 389.4 753.9 392.2 740.0 392.2 738.3 390.7 738.3 391.0Z" fill="#f2671f" stroke="#f2671f"/>
<path d="M773.7 362.3 770.4 360.3 760.8 360.3 754.5 389.4 754.5 392.5 756.5 395.3Z" fill="#f47f25" stroke="#f47f25"/>
<path d="M783.5 363.4 775.6 358.5 773.7 362.3 786.1 369.8Z" fill="#f696f0" stroke="#f696f0"/>
<path d="M780.9 405.0 795.1 391.8 786.1 369.8 773.7 362.3 756.5 395.3 757.0 396.0Z" fill="#f58c2b" stroke="#f58c2b"/>
<path d="M819.6 360.1 810.2 355.7 783.5 363.4 786.1 369.8 789.9 372.1 811.4 360.3 819.5 364.7Z" fill="#f69af0" stroke="#f69af0"/>
<path d="M795.1 391.8 814.8 394.8 818.9 392.8 819.5 364.7 811.4 360.3 789.9 372.1 786.1 369.8Z" fill="#f69934" stroke="#f69934"/>
<path d="M854.0 357.4 850.0 353.8 850.0 363.7 853.6 364.7Z" fill="#f59be6" stroke="#f59be6"/>
<path d="M845.2 349.5 819.6 360.1 819.5 364.7 830.8 370.7 847.5 363.0 850.0 363.7 850.0 353.8Z" fill="#f69ef0" stroke="#f69ef0"/>
<path d="M852.0 388.1 853.6 364.7 847.5 363.0 830.8 370.7 819.5 364.7 818.9 392.8 842.2 395.4Z" fill="#f7a53d" stroke="#f7a53d"/>
<path d="M877.4 353.3 854.0 357.4 853.6 364.7 857.2 365.8 877.8 353.5Z" fill="#f7a8e5" stroke="#f7a8e5"/>
<path d="M886.9 381.7 886.9 359.7 886.4 359.4 880.1 377.6 885.7 382.3Z" fill="#f7a8e5" stroke="#f7a8e5"/>
<path d="M852.0 388.1 866.0 392.7 885.7 382.3 880.1 377.6 886.4 359.4 877.8 353.5 857.2 365.8 853.6 364.7Z" fill="#f8b348" stroke="#f8b348"/>
<path d="M912.8 364.3 905.0 357.5 886.9 359.7 886.9 381.7 901.4 392.2 902.3 392.2 911.4 387.5 914.8 374.6Z" fill="#f8b3e4" stroke="#f8b3e4"/>
<path d="M914.8 374.6 911.4 387.5 916.7 384.8Z" fill="#f9bd51" stroke="#f9bd51"/>
<path d="M922.8 360.9 927.8 360.3 945.2 372.6 946.2 361.7 939.0 355.4Z" fill="#f8b8e4" stroke="#f8b8e4"/>
<path d="M912.8 364.3 914.8 374.6 917.9 362.6Z" fill="#f8b8e4" stroke="#f8b8e4"/>
<path d="M917.9 362.6 914.8 374.6 916.7 384.8 936.3 392.6 943.6 389.6 945.2 372.6 927.8 360.3 922.8 360.9Z" fill="#f9c256" stroke="#f9c256"/>
<path d="M976.5 364.2 969.3 353.7 946.2 361.7 945.2 372.6 946.5 373.5 968.0 361.0 977.1 366.4Z" fill="#f8bde3" stroke="#f8bde3"/>
<path d="M943.6 389.6 965.1 397.7 982.4 386.1 977.1 366.4 968.0 361.0 946.5 373.5 945.2 372.6Z" fill="#fac75a" stroke="#fac75a"/>
<path d="M1002.7 355.2 976.5 364.2 977.1 366.4 986.8 372.1 1005.6 364.4 1009.1 365.3Z" fill="#f8c1e3" stroke="#f8c1e3"/>
<path d="M982.4 386.1 1004.5 389.0 1009.2 386.3 1011.4 368.9 1009.1 365.3 1005.6 364.4 986.8 372.1 977.1 366.4Z" fill="#facb5e" stroke="#facb5e"/>
<path d="M1048.2 376.5 1050.1 365.8 1044.6 360.1 1036.1 376.3 1042.1 381.0Z" fill="#f8c3e3" stroke="#f8c3e3"/>
<path d="M1034.7 349.8 1014.3 366.6 1019.4 367.9 1040.6 356.0Z" fill="#f8c3e3" stroke="#f8c3e3"/>
<path d="M1028.6 390.8 1042.1 381.0 1036.1 376.3 1044.6 360.1 1040.6 356.0 1019.4 367.9 1014.3 366.6 1011.4 368.9 1009.2 386.3Z" fill="#facd60" stroke="#facd60"/>
<path d="M1056.2 383.5 1056.4 362.9 1050.1 365.8 1048.2 376.5Z" fill="#f8c4e3" stroke="#f8c4e3"/>
<path d="M648.3 400.8 631.7 392.3 631.1 399.9 640.9 412.5 639.9 416.4 641.1 421.4 649.4 412.1Z" fill="#ee371c" stroke="#ee371c"/>
<path d="M686.2 424.4 687.4 415.8 683.2 411.4 686.9 403.3 685.4 392.4 660.9 391.1 648.3 400.8 649.4 412.1 668.1 428.8Z" fill="#ee311c" stroke="#ee311c"/>
<path d="M690.3 395.9 688.0 392.5 685.4 392.4 686.9 403.3 683.2 411.4 687.4 415.8Z" fill="#f0511c" stroke="#f0511c"/>
<path d="M703.3 432.3 687.4 415.8 686.2 424.4 700.0 434.3Z" fill="#ee311c" stroke="#ee311c"/>
<path d="M717.0 424.1 709.6 400.5 690.3 395.9 687.4 415.8 703.3 432.3Z" fill="#f0511c" stroke="#f0511c"/>
<path d="M733.3 386.0 733.0 386.1 736.4 389.1Z" fill="#f479ee" stroke="#f479ee"/>
<path d="M709.6 400.5 717.0 424.1 729.9 425.6 732.0 423.1 723.9 414.2 738.3 393.4 738.3 391.0 736.4 389.1 733.0 386.1Z" fill="#f0511c" stroke="#f0511c"/>
<path d="M742.6 410.7 744.9 397.8 738.3 391.0 738.3 393.4 723.9 414.2 732.0 423.1Z" fill="#f2691f" stroke="#f2691f"/>
<path d="M742.6 410.7 760.8 426.8 766.7 424.0 763.6 405.1 757.0 396.0 756.3 395.7 744.9 397.8Z" fill="#f26b1f" stroke="#f26b1f"/>
<path d="M781.0 417.1 780.9 405.0 757.0 396.0 763.6 405.1 766.7 424.0Z" fill="#f48226" stroke="#f48226"/>
<path d="M792.9 434.9 813.5 419.9 814.8 394.8 795.1 391.8 780.9 405.0 781.0 417.1Z" fill="#f58b2b" stroke="#f58b2b"/>
<path d="M844.2 410.8 842.2 395.4 818.9 392.8 814.8 394.8 813.5 419.9 828.8 430.5Z" fill="#f69a34" stroke="#f69a34"/>
<path d="M882.8 419.1 866.0 392.7 852.0 388.1 842.2 395.4 844.2 410.8 856.3 423.9Z" fill="#f7aa41" stroke="#f7aa41"/>
<path d="M886.9 381.7 885.7 382.3 897.5 392.2 901.4 392.2Z" fill="#f7aae4" stroke="#f7aae4"/>
<path d="M901.8 392.5 901.4 392.2 897.5 392.2 885.7 382.3 866.0 392.7 882.8 419.1 890.8 423.2 894.8 421.1Z" fill="#f8b449" stroke="#f8b449"/>
<path d="M902.3 392.2 910.2 392.2 911.4 387.5Z" fill="#f8b4e3" stroke="#f8b4e3"/>
<path d="M901.8 392.5 894.8 421.1 921.4 424.9 927.0 420.1 936.3 392.6 916.7 384.8 911.4 387.5 910.2 392.2 902.3 392.2Z" fill="#f9be52" stroke="#f9be52"/>
<path d="M967.4 417.3 965.1 397.7 943.6 389.6 936.3 392.6 927.0 420.1 957.0 427.8Z" fill="#f9c457" stroke="#f9c457"/>
<path d="M982.4 386.1 965.1 397.7 967.4 417.3 984.1 427.2 1003.7 413.6 1004.5 389.0Z" fill="#fac85b" stroke="#fac85b"/>
<path d="M1003.7 413.6 1021.5 431.1 1039.9 412.8 1028.6 390.8 1009.2 386.3 1004.5 389.0Z" fill="#facb5e" stroke="#facb5e"/>
<path d="M1048.2 376.5 1042.1 381.0 1055.6 391.5 1056.1 391.5 1056.2 383.5Z" fill="#f8c4e1" stroke="#f8c4e1"/>
<path d="M1039.9 412.8 1055.9 416.4 1056.1 391.5 1055.6 391.5 1042.1 381.0 1028.6 390.8Z" fill="#face61" stroke="#face61"/>
<path d="M643.0 456.9 634.9 440.3 634.0 441.7 635.0 452.4 640.9 457.3Z" fill="#ee371c" stroke="#ee371c"/>
<path d="M643.0 456.9 649.8 461.3 664.0 448.0 668.1 428.8 649.4 412.1 641.1 421.4 642.8 428.1 634.9 440.3Z" fill="#ee321c" stroke="#ee321c"/>
<path d="M700.0 434.3 686.2 424.4 668.1 428.8 664.0 448.0 679.1 453.3 684.2 444.8 700.3 440.8Z" fill="#ee331c" stroke="#ee331c"/>
<path d="M692.0 457.8 700.7 450.9 700.3 440.8 684.2 444.8 679.1 453.3Z" fill="#f0531c" stroke="#f0531c"/>
<path d="M700.0 434.3 700.3 440.8 705.8 439.4 704.9 434.0 703.3 432.3Z" fill="#ee381c" stroke="#ee381c"/>
<path d="M712.3 456.7 711.2 444.8 734.4 436.6 729.9 425.6 717.0 424.1 703.3 432.3 704.9 434.0 705.8 439.4 700.3 440.8 700.7 450.9Z" fill="#f0581c" stroke="#f0581c"/>
<path d="M722.3 461.8 740.6 451.9 734.4 436.6 711.2 444.8 712.3 456.7Z" fill="#f26e1f" stroke="#f26e1f"/>
<path d="M729.9 425.6 734.4 436.6 741.9 434.0 732.0 423.1Z" fill="#f0521c" stroke="#f0521c"/>
<path d="M752.3 454.8 752.3 454.8 752.7 453.9 752.7 446.6 757.8 443.8 760.8 426.8 742.6 410.7 732.0 423.1 741.9 434.0 734.4 436.6 740.6 451.9Z" fill="#f2691f" stroke="#f2691f"/>
<path d="M756.0 454.2 757.8 443.8 752.7 446.6 752.7 453.9 752.3 454.8Z" fill="#f48126" stroke="#f48126"/>
<path d="M757.8 443.8 769.0 437.6 766.7 424.0 760.8 426.8Z" fill="#f2681f" stroke="#f2681f"/>
<path d="M756.0 454.2 769.0 458.2 792.8 438.2 792.9 434.9 781.0 417.1 766.7 424.0 769.0 437.6 757.8 443.8Z" fill="#f58829" stroke="#f58829"/>
<path d="M828.8 430.5 813.5 419.9 792.9 434.9 792.8 438.2 810.9 452.9 833.7 451.8Z" fill="#f69c35" stroke="#f69c35"/>
<path d="M850.2 447.3 856.3 423.9 844.2 410.8 828.8 430.5 833.7 451.8 835.1 452.7Z" fill="#f7a940" stroke="#f7a940"/>
<path d="M882.8 419.1 856.3 423.9 850.2 447.3 870.6 452.6 886.1 444.5 890.8 423.2Z" fill="#f8b449" stroke="#f8b449"/>
<path d="M921.4 424.9 894.8 421.1 890.8 423.2 886.1 444.5 903.8 463.6 929.8 456.8 930.3 456.4Z" fill="#f9bc51" stroke="#f9bc51"/>
<path d="M953.4 454.7 957.0 427.8 927.0 420.1 921.4 424.9 930.3 456.4Z" fill="#f9c457" stroke="#f9c457"/>
<path d="M966.8 463.7 988.3 444.1 984.1 427.2 967.4 417.3 957.0 427.8 953.4 454.7Z" fill="#fac75a" stroke="#fac75a"/>
<path d="M988.3 444.1 1016.2 451.8 1020.6 449.3 1021.5 431.1 1003.7 413.6 984.1 427.2Z" fill="#facb5e" stroke="#facb5e"/>
<path d="M1055.6 446.2 1055.9 416.4 1039.9 412.8 1021.5 431.1 1020.6 449.3 1037.2 455.2 1055.4 446.5Z" fill="#face61" stroke="#face61"/>
<path d="M640.9 457.3 650.6 465.2 649.8 461.3 643.0 456.9Z" fill="#ee351c" stroke="#ee351c"/>
<path d="M664.0 448.0 649.8 461.3 650.6 465.2 657.4 470.9 654.9 473.9 674.5 488.3 683.6 487.4 689.2 467.8 673.3 462.9 679.1 453.3Z" fill="#ee341c" stroke="#ee341c"/>
<path d="M692.0 457.8 679.1 453.3 673.3 462.9 689.2 467.8Z" fill="#f0541c" stroke="#f0541c"/>
<path d="M683.6 487.4 685.9 488.7 686.0 488.0 696.8 470.1 689.2 467.8Z" fill="#ee381c" stroke="#ee381c"/>
<path d="M700.7 450.9 692.0 457.8 689.2 467.8 696.8 470.1 686.0 488.0 685.9 488.7 699.3 496.6 716.2 489.1 716.6 484.5 719.4 483.9 721.8 465.7 713.0 464.7 712.3 456.7Z" fill="#f0581c" stroke="#f0581c"/>
<path d="M722.3 461.8 712.3 456.7 713.0 464.7 721.8 465.7Z" fill="#f26e1f" stroke="#f26e1f"/>
<path d="M718.9 487.9 719.4 483.9 716.6 484.5 716.2 489.1Z" fill="#f26e1f" stroke="#f26e1f"/>
<path d="M719.4 483.9 741.9 479.1 745.5 468.3 721.8 465.7Z" fill="#f0511c" stroke="#f0511c"/>
<path d="M721.8 465.7 745.5 468.3 741.9 479.1 719.4 483.9 718.9 487.9 736.2 495.9 743.5 493.7 746.8 479.1 746.0 468.3 752.3 454.8 752.3 454.8 740.6 451.9 722.3 461.8Z" fill="#f2681f" stroke="#f2681f"/>
<path d="M752.3 454.8 746.0 468.3 746.8 479.1Z" fill="#f48026" stroke="#f48026"/>
<path d="M743.5 493.7 749.0 495.1 747.3 485.0 746.8 479.1Z" fill="#f26e1f" stroke="#f26e1f"/>
<path d="M780.9 480.7 769.0 458.2 756.0 454.2 752.3 454.8 752.3 454.8 746.8 479.1 747.3 485.0 749.0 495.1 765.6 499.4Z" fill="#f58427" stroke="#f58427"/>
<path d="M810.9 452.9 792.8 438.2 769.0 458.2 780.9 480.7 794.0 482.9 798.4 480.1Z" fill="#f58b2a" stroke="#f58b2a"/>
<path d="M833.7 451.8 810.9 452.9 798.4 480.1 834.1 483.8 838.0 480.1 835.1 452.7Z" fill="#f69c36" stroke="#f69c36"/>
<path d="M870.6 452.6 850.2 447.3 835.1 452.7 838.0 480.1 864.8 488.1 869.4 485.6Z" fill="#f7aa41" stroke="#f7aa41"/>
<path d="M886.1 444.5 870.6 452.6 869.4 485.6 883.2 487.1 900.4 474.4 903.8 463.6Z" fill="#f8b54a" stroke="#f8b54a"/>
<path d="M932.2 486.9 929.8 456.8 903.8 463.6 900.4 474.4 923.7 501.5Z" fill="#f9bf52" stroke="#f9bf52"/>
<path d="M929.8 456.8 932.2 486.9 960.5 484.1 969.8 474.0 966.8 463.7 953.4 454.7 930.3 456.4Z" fill="#f9c457" stroke="#f9c457"/>
<path d="M966.8 463.7 969.8 474.0 989.3 486.2 1003.3 484.4 1016.2 451.8 988.3 444.1Z" fill="#fac95c" stroke="#fac95c"/>
<path d="M1020.6 449.3 1016.2 451.8 1003.3 484.4 1019.5 498.4 1044.4 479.2 1037.2 455.2Z" fill="#facb5e" stroke="#facb5e"/>
<path d="M1055.4 446.5 1037.2 455.2 1044.4 479.2 1055.2 484.2 1055.6 446.7Z" fill="#face61" stroke="#face61"/>
<path d="M662.7 508.5 674.5 488.3 654.9 473.9 641.8 489.4 654.2 511.2Z" fill="#ee301c" stroke="#ee301c"/>
<path d="M677.5 531.4 679.2 529.4 678.7 526.5 690.5 512.1 684.2 501.2 685.9 488.7 683.6 487.4 674.5 488.3 662.7 508.5Z" fill="#ee361c" stroke="#ee361c"/>
<path d="M699.9 504.1 699.3 496.6 685.9 488.7 684.2 501.2 690.5 512.1 678.7 526.5 679.2 529.4Z" fill="#f0561c" stroke="#f0561c"/>
<path d="M699.3 496.6 699.9 504.1 710.7 522.1 729.3 518.7 732.9 508.5 714.8 503.1 716.2 489.1Z" fill="#f0531c" stroke="#f0531c"/>
<path d="M734.4 517.7 736.2 495.9 718.9 487.9 716.2 489.1 714.8 503.1 732.9 508.5 729.3 518.7Z" fill="#f26a1f" stroke="#f26a1f"/>
<path d="M743.5 493.7 736.2 495.9 734.4 517.7 745.5 532.9 757.7 527.1 760.0 517.5 767.2 514.8 745.5 504.9 749.1 495.8 749.0 495.1Z" fill="#f26d1f" stroke="#f26d1f"/>
<path d="M770.3 521.2 765.6 499.4 749.0 495.1 749.1 495.8 745.5 504.9 767.2 514.8 760.0 517.5 757.7 527.1Z" fill="#f58327" stroke="#f58327"/>
<path d="M794.0 482.9 780.9 480.7 765.6 499.4 770.3 521.2 777.1 525.2 806.1 512.8Z" fill="#f58c2b" stroke="#f58c2b"/>
<path d="M826.1 512.6 834.1 483.8 798.4 480.1 794.0 482.9 806.1 512.8 813.4 515.6Z" fill="#f69b35" stroke="#f69b35"/>
<path d="M838.3 520.6 861.4 513.4 864.8 488.1 838.0 480.1 834.1 483.8 826.1 512.6Z" fill="#f7a83f" stroke="#f7a83f"/>
<path d="M864.8 488.1 861.4 513.4 868.0 519.5 899.8 515.9 883.2 487.1 869.4 485.6Z" fill="#f8b449" stroke="#f8b449"/>
<path d="M900.4 474.4 883.2 487.1 899.8 515.9 905.6 519.1 923.7 503.5 923.7 501.5Z" fill="#f9be52" stroke="#f9be52"/>
<path d="M923.7 503.5 950.4 516.2 954.0 515.6 960.5 484.1 932.2 486.9 923.7 501.5Z" fill="#f9c457" stroke="#f9c457"/>
<path d="M960.5 484.1 954.0 515.6 970.9 522.4 980.5 514.7 989.3 486.2 969.8 474.0Z" fill="#fac85b" stroke="#fac85b"/>
<path d="M989.3 486.2 980.5 514.7 1003.6 520.5 1021.6 507.2 1019.5 498.4 1003.3 484.4Z" fill="#facb5e" stroke="#facb5e"/>
<path d="M1019.5 498.4 1021.6 507.2 1032.6 517.5 1054.9 514.4 1055.2 484.2 1044.4 479.2Z" fill="#face61" stroke="#face61"/>
<path d="M634.2 552.0 632.1 549.5 632.1 553.0Z" fill="#ee371c" stroke="#ee371c"/>
<path d="M634.2 552.0 635.4 552.2 647.2 543.2 646.3 519.0 632.1 527.9 632.1 549.5Z" fill="#ee311c" stroke="#ee311c"/>
<path d="M647.2 543.2 664.5 543.7 677.5 538.1 677.5 531.4 662.7 508.5 654.2 511.2 655.4 513.3 646.3 519.0Z" fill="#ee341c" stroke="#ee341c"/>
<path d="M677.5 531.4 677.5 538.1 680.9 540.2 679.2 529.4Z" fill="#ee301c" stroke="#ee301c"/>
<path d="M699.9 504.1 679.2 529.4 680.9 540.2 698.6 551.1 707.5 547.2 710.7 522.1Z" fill="#f0501c" stroke="#f0501c"/>
<path d="M710.7 522.1 707.5 547.2 733.4 553.8 738.3 546.4 723.9 533.7 729.3 518.7Z" fill="#f0501c" stroke="#f0501c"/>
<path d="M734.8 554.2 738.7 551.5 745.5 532.9 734.4 517.7 729.3 518.7 723.9 533.7 738.3 546.4 733.4 553.8Z" fill="#f2681f" stroke="#f2681f"/>
<path d="M768.1 560.7 777.0 555.3 752.7 548.2 757.7 527.1 745.5 532.9 738.7 551.5Z" fill="#f26c1f" stroke="#f26c1f"/>
<path d="M784.8 550.7 777.1 525.2 770.3 521.2 757.7 527.1 752.7 548.2 777.0 555.3Z" fill="#f48227" stroke="#f48227"/>
<path d="M806.1 512.8 777.1 525.2 784.8 550.7 792.2 554.1 810.2 548.8 813.4 515.6Z" fill="#f58d2c" stroke="#f58d2c"/>
<path d="M810.2 548.8 824.5 555.4 842.4 551.3 838.3 520.6 826.1 512.6 813.4 515.6Z" fill="#f69c36" stroke="#f69c36"/>
<path d="M868.0 519.5 861.4 513.4 838.3 520.6 842.4 551.3 852.6 556.7 869.7 551.7Z" fill="#f7ab41" stroke="#f7ab41"/>
<path d="M906.9 536.6 905.6 519.1 899.8 515.9 868.0 519.5 869.7 551.7 884.0 555.6Z" fill="#f8b64b" stroke="#f8b64b"/>
<path d="M906.9 536.6 918.9 544.0 936.8 544.1 950.4 516.2 923.7 503.5 905.6 519.1Z" fill="#f9be52" stroke="#f9be52"/>
<path d="M950.4 516.2 936.8 544.1 953.2 560.3 973.7 549.0 976.1 544.0 970.9 522.4 954.0 515.6Z" fill="#f9c457" stroke="#f9c457"/>
<path d="M980.5 514.7 970.9 522.4 976.1 544.0 1002.8 542.5 1003.6 520.5Z" fill="#fac85b" stroke="#fac85b"/>
<path d="M1003.6 520.5 1002.8 542.5 1017.6 552.5 1028.9 546.5 1032.6 517.5 1021.6 507.2Z" fill="#facb5e" stroke="#facb5e"/>
<path d="M1032.6 517.5 1028.9 546.5 1046.0 553.1 1054.6 548.1 1054.9 514.4Z" fill="#face61" stroke="#face61"/>
<path d="M645.0 576.7 635.4 552.2 634.2 552.0 632.1 553.0 632.1 555.2 639.9 564.9 639.9 571.7 643.6 580.7Z" fill="#ee301c" stroke="#ee301c"/>
<path d="M645.0 576.7 668.6 573.9 664.5 543.7 647.2 543.2 635.4 552.2Z" fill="#ee331c" stroke="#ee331c"/>
<path d="M686.0 581.2 690.3 578.9 684.2 573.4 684.2 560.8 680.9 540.2 677.5 538.1 664.5 543.7 668.6 573.9Z" fill="#ee301c" stroke="#ee301c"/>
<path d="M690.4 578.8 698.6 551.1 680.9 540.2 684.2 560.8 684.2 573.4 690.3 578.9Z" fill="#f0501c" stroke="#f0501c"/>
<path d="M698.6 551.1 690.4 578.8 710.4 589.2 730.1 576.9 723.9 568.0 733.4 553.8 707.5 547.2Z" fill="#f0501c" stroke="#f0501c"/>
<path d="M734.4 574.2 734.8 554.2 733.4 553.8 723.9 568.0 730.1 576.9Z" fill="#f2681f" stroke="#f2681f"/>
<path d="M734.4 574.2 750.1 593.1 764.9 588.8 760.0 564.4 768.0 561.9 768.1 560.7 738.7 551.5 734.8 554.2Z" fill="#f2671f" stroke="#f2671f"/>
<path d="M767.1 588.1 768.0 561.9 760.0 564.4 764.9 588.8Z" fill="#f47f25" stroke="#f47f25"/>
<path d="M768.1 560.7 768.0 561.9 783.4 557.2 777.0 555.3Z" fill="#f2691f" stroke="#f2691f"/>
<path d="M767.1 588.1 768.8 588.9 795.8 575.2 792.2 554.1 784.8 550.7 777.0 555.3 783.4 557.2 768.0 561.9Z" fill="#f58a2a" stroke="#f58a2a"/>
<path d="M795.8 575.2 807.4 586.8 818.9 581.3 824.5 555.4 810.2 548.8 792.2 554.1Z" fill="#f69933" stroke="#f69933"/>
<path d="M850.8 577.6 852.6 556.7 842.4 551.3 824.5 555.4 818.9 581.3 841.7 591.2Z" fill="#f7a73f" stroke="#f7a73f"/>
<path d="M869.7 551.7 852.6 556.7 850.8 577.6 881.0 591.7 892.6 580.5 884.0 555.6Z" fill="#f8b449" stroke="#f8b449"/>
<path d="M892.6 580.5 902.1 583.4 920.5 575.2 918.9 544.0 906.9 536.6 884.0 555.6Z" fill="#f9be52" stroke="#f9be52"/>
<path d="M920.5 575.2 943.3 581.7 949.5 575.6 953.2 560.3 936.8 544.1 918.9 544.0Z" fill="#f9c356" stroke="#f9c356"/>
<path d="M990.4 575.0 973.7 549.0 953.2 560.3 949.5 575.6 977.2 587.0Z" fill="#fac85b" stroke="#fac85b"/>
<path d="M1017.6 552.5 1002.8 542.5 976.1 544.0 973.7 549.0 990.4 575.0 1010.7 576.3Z" fill="#facb5e" stroke="#facb5e"/>
<path d="M1017.6 552.5 1010.7 576.3 1013.1 580.5 1031.3 591.6 1054.2 585.0 1054.2 583.2 1046.0 553.1 1028.9 546.5Z" fill="#face61" stroke="#face61"/>
<path d="M1054.2 583.2 1054.6 548.1 1046.0 553.1Z" fill="#face61" stroke="#face61"/>
<path d="M643.6 584.5 635.0 593.1 634.7 611.2 664.7 611.4Z" fill="#ee341c" stroke="#ee341c"/>
<path d="M643.6 580.7 644.7 583.4 643.6 584.5 664.7 611.4 673.6 611.4 686.0 581.2 668.6 573.9 645.0 576.7Z" fill="#ee391c" stroke="#ee391c"/>
<path d="M686.0 581.2 673.6 611.4 675.1 611.4 675.1 611.4 686.0 595.1 702.2 589.7 690.3 578.9Z" fill="#ee2f1c" stroke="#ee2f1c"/>
<path d="M710.4 589.2 690.4 578.8 690.3 578.9 702.2 589.7 686.0 595.1 675.1 611.4 675.1 611.4 711.2 611.6 711.2 611.4 709.4 600.5 713.3 598.4Z" fill="#f04f1c" stroke="#f04f1c"/>
<path d="M716.4 608.7 713.3 598.4 709.4 600.5 711.2 611.4 711.2 611.6 713.5 611.6Z" fill="#f2671f" stroke="#f2671f"/>
<path d="M710.4 589.2 713.3 598.4 736.5 586.1 730.1 576.9Z" fill="#f0521c" stroke="#f0521c"/>
<path d="M750.1 593.1 734.4 574.2 730.1 576.9 736.5 586.1 713.3 598.4 716.4 608.7 732.7 611.7 742.5 611.8Z" fill="#f2691f" stroke="#f2691f"/>
<path d="M750.1 593.1 742.5 611.8 752.7 611.8 752.7 602.3 765.4 591.5 764.9 588.8Z" fill="#f26d1f" stroke="#f26d1f"/>
<path d="M764.9 588.8 765.4 591.5 752.7 602.3 752.7 611.8 742.5 611.8 775.7 611.9 781.4 603.7 768.8 588.9 767.1 588.1Z" fill="#f58327" stroke="#f58327"/>
<path d="M768.8 588.9 781.4 603.7 802.1 607.6 807.4 586.8 795.8 575.2Z" fill="#f58a2a" stroke="#f58a2a"/>
<path d="M843.6 605.4 841.7 591.2 818.9 581.3 807.4 586.8 802.1 607.6 802.2 607.8 816.0 612.1 831.3 612.2Z" fill="#f69d36" stroke="#f69d36"/>
<path d="M849.9 609.3 876.8 603.3 881.0 591.7 850.8 577.6 841.7 591.2 843.6 605.4Z" fill="#f7aa41" stroke="#f7aa41"/>
<path d="M881.9 612.5 911.9 612.6 915.0 611.8 902.1 583.4 892.6 580.5 881.0 591.7 876.8 603.3Z" fill="#f8b74b" stroke="#f8b74b"/>
<path d="M915.0 611.8 916.4 612.6 928.1 612.7 942.1 601.2 943.3 581.7 920.5 575.2 902.1 583.4Z" fill="#f9be52" stroke="#f9be52"/>
<path d="M978.3 605.7 977.2 587.0 949.5 575.6 943.3 581.7 942.1 601.2 962.0 612.8 964.9 612.9Z" fill="#f9c558" stroke="#f9c558"/>
<path d="M994.5 612.5 1013.1 580.5 1010.7 576.3 990.4 575.0 977.2 587.0 978.3 605.7Z" fill="#fac85b" stroke="#fac85b"/>
<path d="M1031.3 591.6 1013.1 580.5 994.5 612.5 994.8 613.0 1028.6 613.2Z" fill="#facb5e" stroke="#facb5e"/>
<path d="M1031.3 591.6 1028.6 613.2 1053.9 613.3 1054.2 585.0Z" fill="#facd60" stroke="#facd60"/>
<path d="M716.4 608.7 713.5 611.6 732.7 611.7Z" fill="#f26d1f" stroke="#f26d1f"/>
<path d="M802.2 607.8 802.1 607.6 781.4 603.7 775.7 611.9 801.1 612.1Z" fill="#f58c2b" stroke="#f58c2b"/>
<path d="M802.2 607.8 801.1 612.1 816.0 612.1Z" fill="#f69a35" stroke="#f69a35"/>
<path d="M831.3 612.2 850.7 612.3 849.9 609.3 843.6 605.4Z" fill="#f7a63d" stroke="#f7a63d"/>
<path d="M850.7 612.3 881.9 612.5 876.8 603.3 849.9 609.3Z" fill="#f8b349" stroke="#f8b349"/>
<path d="M915.0 611.8 911.9 612.6 916.4 612.6Z" fill="#f9be52" stroke="#f9be52"/>
<path d="M928.1 612.7 962.0 612.8 942.1 601.2Z" fill="#f9c457" stroke="#f9c457"/>
<path d="M964.9 612.9 994.8 613.0 994.5 612.5 978.3 605.7Z" fill="#fac85b" stroke="#fac85b"/>
<path d="M657.4 400.9 670.6 395.2 676.0 370.7 656.7 359.6 656.1 357.6 633.2 372.2 631.1 399.9Z" fill="#e81414" stroke="#e81414"/>
<path d="M657.1 470.1 673.3 462.9 684.2 444.8 673.3 427.7 657.1 431.3 636.8 437.4 634.0 441.7 635.0 452.4 654.7 468.7Z" fill="#e81514" stroke="#e81514"/>
<path d="M644.4 556.3 670.6 548.2 674.2 525.6 690.5 512.1 684.2 502.1 655.3 512.1 654.9 512.4 655.4 513.3 632.1 527.9 632.1 555.2 632.4 555.5Z" fill="#e81414" stroke="#e81414"/>
<path d="M686.0 595.1 678.7 578.9 657.1 586.1 638.2 589.9 635.0 593.1 634.7 611.2 675.1 611.4 675.1 611.4Z" fill="#e81514" stroke="#e81514"/>
<path d="M562.4 322.9 589.0 322.0 587.4 313.9 558.2 311.1Z" fill="#3e48e2" stroke="#3e48e2"/>
<path d="M589.0 322.0 594.3 340.3 619.0 322.0 620.7 316.7 596.4 308.3 587.4 313.9Z" fill="#373ede" stroke="#373ede"/>
<path d="M625.0 322.0 636.5 335.5 642.3 335.0 657.8 313.5 635.4 297.0 633.2 300.0 620.7 316.7Z" fill="#6078ed" stroke="#6078ed"/>
<path d="M559.6 348.6 562.4 322.9 558.2 311.1 546.6 313.8 546.6 354.6Z" fill="#5a6eec" stroke="#5a6eec"/>
<path d="M569.3 379.9 583.2 391.7 597.1 391.7 605.4 365.3 612.4 359.7 592.3 351.1 579.0 355.6Z" fill="#00008a" stroke="#00008a"/>
<path d="M615.9 359.7 633.2 372.2 656.1 357.6 642.3 335.0 636.5 335.5Z" fill="#00007a" stroke="#00007a"/>
<path d="M642.3 261.0 661.7 243.5 631.6 243.5Z" fill="#cbbefa" stroke="#cbbefa"/>
<path d="M656.7 359.6 676.0 370.7 692.0 360.3 692.1 356.8 683.5 345.0 656.1 357.6Z" fill="#ec0cb2" stroke="#ec0cb2"/>
<path d="M692.0 360.3 699.7 363.0 718.5 351.3 713.6 347.1 692.1 356.8Z" fill="#f04bc8" stroke="#f04bc8"/>
<path d="M724.0 378.3 740.0 392.2 753.9 392.2 760.8 360.3 748.3 350.6 733.0 355.4Z" fill="#f370a0" stroke="#f370a0"/>
<path d="M789.9 372.1 811.4 360.3 811.4 356.8 798.2 336.7 792.6 335.3 770.4 360.3Z" fill="#f280a2" stroke="#f280a2"/>
<path d="M811.4 360.3 830.8 370.7 847.5 363.0 847.5 354.0 839.9 343.6 811.4 356.8Z" fill="#f394c0" stroke="#f394c0"/>
<path d="M847.5 363.0 857.2 365.8 879.4 352.6 872.5 344.3 847.5 354.0Z" fill="#f49ebe" stroke="#f49ebe"/>
<path d="M880.1 377.6 897.5 392.2 910.2 392.2 918.2 361.5 904.9 348.5 903.0 349.9 887.8 355.4Z" fill="#f6aca0" stroke="#f6aca0"/>
<path d="M946.5 373.5 968.0 361.0 968.0 356.8 955.6 336.0 948.6 336.0 927.8 360.3Z" fill="#f6b2a0" stroke="#f6b2a0"/>
<path d="M968.0 361.0 986.8 372.1 1005.6 364.4 1005.6 353.3 997.2 342.2 968.0 356.8Z" fill="#f7b8b2" stroke="#f7b8b2"/>
<path d="M1005.6 364.4 1019.4 367.9 1041.7 355.4 1030.6 342.9 1005.6 353.3Z" fill="#f7bca5" stroke="#f7bca5"/>
<path d="M1047.0 355.4 1036.1 376.3 1055.8 391.5 1056.5 352.6Z" fill="#f8c891" stroke="#f8c891"/>
<path d="M640.9 412.5 657.4 400.9 631.1 399.9Z" fill="#a50000" stroke="#a50000"/>
<path d="M639.9 564.9 649.6 557.1 632.1 555.2Z" fill="#aa0000" stroke="#aa0000"/>
</g></svg>
<svg class="a" style="left:1150px;top:660px" width="120" height="24" viewBox="1150 660 120 24">
<defs><radialGradient id="sg" cx=".4" cy=".3" r=".7"><stop offset="0" stop-color="#e8ecf6"/><stop offset=".5" stop-color="#9aa2bc"/><stop offset="1" stop-color="#4a4e62"/></radialGradient>
<linearGradient id="ib" x1="0" y1="0" x2="0" y2="1"><stop offset="0" stop-color="#787e96"/><stop offset="1" stop-color="#686c82"/></linearGradient></defs>
<rect x="1155" y="664.2" width="15" height="15.3" fill="#b86e1c"/>
<path d="M1155.6 673 L1162.2 668.4 L1168.8 672 L1161.8 676.4Z" fill="#e4ecfa"/><path d="M1155.6 673 L1161.8 676.4 L1168.8 672 L1168.8 673 L1161.8 677.6 L1155.6 674Z" fill="#9aa6c8"/>
<g fill="url(#ib)"><rect x="1171" y="664.2" width="15" height="15.3"/><rect x="1187" y="664.2" width="15" height="15.3"/><rect x="1203" y="664.2" width="15" height="15.3"/><rect x="1219" y="664.2" width="15" height="15.3"/><rect x="1235" y="664.2" width="15" height="15.3"/><rect x="1251" y="664.2" width="15" height="15.3"/></g>
<path d="M1172.4 668.2 L1176 666.2 L1184 667.4 L1180.6 669.8Z" fill="#c4cade"/><path d="M1172.4 668.2 L1180.6 669.8 L1180.6 678.4 L1172.4 676.6Z" fill="#9ea6c0"/><path d="M1180.6 669.8 L1184 667.4 L1184 675.6 L1180.6 678.4Z" fill="#4e5268"/><path d="M1183.6 673.4 L1185.8 674.6 L1183.6 675.8Z" fill="#15151c"/>
<circle cx="1194.2" cy="671.6" r="5.6" fill="url(#sg)"/><ellipse cx="1194.6" cy="678.2" rx="5" ry="1" fill="#3e4254"/>
<path d="M1205.4 667.2 L1209 666 L1214 666.8 L1214 677.6 L1209.6 678.6 L1205.4 677.6Z" fill="#a6aec6"/><path d="M1209.4 667.6 L1214 666.8 L1214 677.6 L1209.6 678.6Z" fill="#5a5e76"/><path d="M1205.4 667.2 L1209 666 L1214 666.8 L1209.4 667.8Z" fill="#d0d6e6"/><path d="M1214 673.6 L1216.4 674.8 L1214 676Z" fill="#15151c"/>
<path d="M1222 672 Q1221.6 667 1226.4 666.6 Q1231.6 666.6 1232 672.6 L1231.4 678.4 L1224.4 678.4 Q1224.8 674.8 1222 672Z" fill="#a8b0c8" opacity=".85"/><path d="M1221.4 670 Q1222.6 666 1226 665.6" stroke="#c2c8da" stroke-width=".8" fill="none"/>
<path d="M1237 668 L1240.4 667.4 M1237.4 670 L1240.4 669.6 M1238 676.6 L1240.6 671.4 L1241.8 676 L1244.2 670.6 L1245.2 676.2 L1247.4 671 L1248.2 675.4" stroke="#ccd2e2" stroke-width="1.2" fill="none"/>
<path d="M1258.6 667 L1259 678.6" stroke="#ccd2e4" stroke-width="1.6"/><path d="M1257 667.2 L1258.6 668.6 L1260.4 667" stroke="#b8bed2" stroke-width=".9" fill="none"/>
</svg>
<!-- cursor -->
<svg class="a" style="left:792px;top:342px" width="24" height="30" viewBox="792 342 24 30">
<path d="M796.6 346 L796.6 362.6 L800.4 359.2 L803.2 365.8 L806 364.6 L803.2 358.2 L808.4 358Z" fill="#fff" stroke="#111" stroke-width="1.1" stroke-linejoin="round"/>
</svg>
</body></html>
